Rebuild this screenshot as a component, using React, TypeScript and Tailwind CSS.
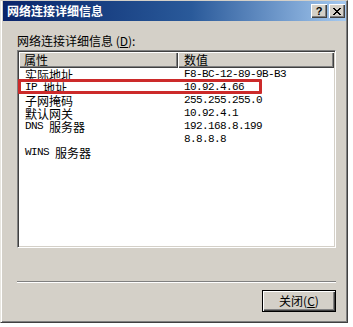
const rows: [string, string][] = [
  ['实际地址', 'F8-BC-12-89-9B-B3'],
  ['IP 地址', '10.92.4.66'],
  ['子网掩码', '255.255.255.0'],
  ['默认网关', '10.92.4.1'],
  ['DNS 服务器', '192.168.8.199'],
  ['', '8.8.8.8'],
  ['WINS 服务器', ''],
]

const cjk = "font-['SimSun','Noto_Sans_CJK_SC',sans-serif]"
const mono = "font-['Liberation_Mono','Noto_Sans_CJK_SC',monospace] text-[11px] tracking-[-0.6px]"

function CellText({ text }: { text: string }) {
  // latin parts in mono, hanzi in CJK font
  const parts = text.split(/([\u4e00-\u9fff]+)/).filter(Boolean)
  return (
    <>
      {parts.map((p, i) =>
        /[\u4e00-\u9fff]/.test(p) ? (
          <span key={i} className={`${cjk} inline-block h-[13px] text-[12px] leading-[13px] align-top`}>
            {p}
          </span>
        ) : (
          <span key={i} className={`${mono} inline-block h-[13px] leading-[13px] align-top whitespace-pre`}>
            {p}
          </span>
        )
      )}
    </>
  )
}

export default function App() {
  return (
    <div className="w-[353px] h-[327px] bg-white overflow-hidden">
      <div className="w-[348px] h-[323px] bg-[#d4d0c8] border-t border-l border-t-[#d4d0c8] border-l-[#e8e6e0] border-r border-b border-r-[#404040] border-b-[#404040] flex flex-col shadow-[inset_1px_0_0_#ffffff,inset_-1px_-1px_0_#808080]">
        {/* title bar */}
        <div className="ml-[2px] mr-[1px] h-[20px] bg-gradient-to-r from-[#0a246a] via-[#2a5a9a] via-55% to-[#a6caf0] flex items-center pl-[4px] pr-[1px]">
          <span className={`${cjk} text-[12px] font-bold text-white flex-1 leading-none`}>
            网络连接详细信息
          </span>
          <div className="flex gap-[2px]">
            <div className="w-[16px] h-[14px] bg-[#d4d0c8] shadow-[inset_1px_1px_0_#ffffff,inset_-1px_-1px_0_#404040,inset_-2px_-2px_0_#808080] flex items-center justify-center font-['Liberation_Sans',sans-serif] font-bold text-[11px] text-black leading-none">
              ?
            </div>
            <div className="w-[16px] h-[14px] bg-[#d4d0c8] shadow-[inset_1px_1px_0_#ffffff,inset_-1px_-1px_0_#404040,inset_-2px_-2px_0_#808080] flex items-center justify-center">
              <svg width="8" height="7" viewBox="0 0 8 7">
                <path d="M0 0 L7 7 M1 0 L8 7 M7 0 L0 7 M8 0 L1 7" stroke="#000" strokeWidth="1" />
              </svg>
            </div>
          </div>
        </div>

        <div className="pl-[16px] pr-[11px] flex flex-col">
          <div className={`${cjk} mt-[13px] h-[14px] text-[12px] leading-[14px] text-black`}>
            网络连接详细信息 (<span className="underline">D</span>):
          </div>

          {/* list */}
          <div className="relative mt-[2px] h-[198px] bg-white border-t border-l border-t-[#808080] border-l-[#808080] border-r border-b border-r-white border-b-white shadow-[inset_1px_1px_0_#404040,inset_-1px_-1px_0_#d4d0c8] p-[1px] flex flex-col overflow-hidden">
            <div className="relative z-10 flex h-[16px] shrink-0">
              <div className={`${cjk} w-[159px] h-full bg-[#d4d0c8] shadow-[inset_1px_1px_0_#ffffff,inset_-1px_-1px_0_#404040,inset_-2px_-2px_0_#808080] pl-[5px] text-[12px] leading-[15px] text-black`}>
                属性
              </div>
              <div className={`${cjk} flex-1 h-full bg-[#d4d0c8] shadow-[inset_1px_1px_0_#ffffff,inset_-1px_-1px_0_#404040,inset_-2px_-2px_0_#808080] pl-[6px] text-[12px] leading-[15px] text-black`}>
                数值
              </div>
            </div>
            <div className="flex flex-col">
              {rows.map(([k, v], i) => (
                <div key={i} className="flex h-[13px] text-black leading-[13px]">
                  <div className="w-[159px] pl-[6px] whitespace-nowrap">
                    <CellText text={k} />
                  </div>
                  <div className="flex-1 pl-[6px] whitespace-nowrap">
                    <CellText text={v} />
                  </div>
                </div>
              ))}
            </div>
            {/* red annotation */}
            <div className="absolute left-0 top-[28px] w-[244px] h-[15px] border-[3px] border-[#cc2a2a] rounded-[1px] pointer-events-none z-20" />
          </div>

          {/* separator */}
          <div className="mt-[33px] h-[2px] border-t border-t-[#808080] border-b border-b-white" />

          <div className="flex justify-end mt-[7px]">
            <div className={`${cjk} w-[74px] h-[22px] border border-black bg-[#d4d0c8] shadow-[inset_1px_1px_0_#ffffff,inset_-1px_-1px_0_#404040,inset_-2px_-2px_0_#808080] flex items-center justify-center text-[12px] text-black leading-none`}>
              关闭(<span className="underline">C</span>)
            </div>
          </div>
        </div>
      </div>
    </div>
  )
}
